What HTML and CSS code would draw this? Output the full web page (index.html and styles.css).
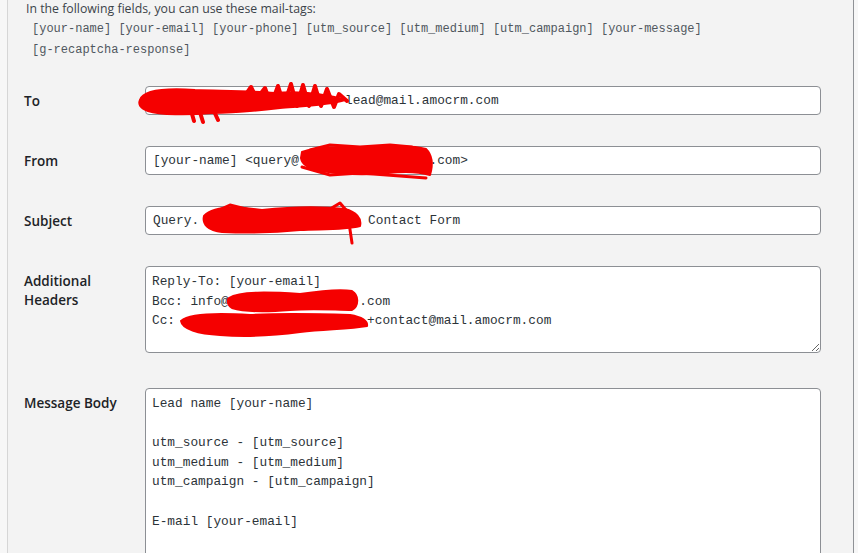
FILE: index.html
```html
<!DOCTYPE html>
<html lang="en">
<head>
<meta charset="utf-8">
<title>Mail</title>
<link rel="stylesheet" href="styles.css">
</head>
<body>
<div class="panel">
  <p class="intro">In the following fields, you can use these mail-tags:</p>
  <p class="tags"><span class="tag">[your-name]</span> <span class="tag">[your-email]</span> <span class="tag">[your-phone]</span> <span class="tag">[utm_source]</span> <span class="tag">[utm_medium]</span> <span class="tag">[utm_campaign]</span> <span class="tag">[your-message]</span> <span class="tag">[g-recaptcha-response]</span></p>
  <div class="form">
    <div class="row">
      <label class="lbl" for="f-to">To</label>
      <input class="field" id="f-to" type="text" value="                         lead@mail.amocrm.com">
    </div>
    <div class="row">
      <label class="lbl" for="f-from">From</label>
      <input class="field" id="f-from" type="text" value="[your-name] &lt;query@                 .com&gt;">
    </div>
    <div class="row">
      <label class="lbl" for="f-subject">Subject</label>
      <input class="field" id="f-subject" type="text" value="Query.                      Contact Form">
    </div>
    <div class="row">
      <label class="lbl" for="f-headers">Additional Headers</label>
      <textarea class="field area" id="f-headers">Reply-To: [your-email]
Bcc: info@                 .com
Cc:                         +contact@mail.amocrm.com</textarea>
    </div>
    <div class="row row-body">
      <label class="lbl" for="f-body">Message Body</label>
      <textarea class="field area body-area" id="f-body">Lead name [your-name]

utm_source - [utm_source]
utm_medium - [utm_medium]
utm_campaign - [utm_campaign]

E-mail [your-email]</textarea>
    </div>
  </div>
</div>
<svg class="redact" width="858" height="553" viewBox="0 0 858 553" aria-hidden="true">
  <g fill="#f50000" stroke="#f50000" stroke-linecap="round" stroke-linejoin="round">
    <!-- To -->
    <path stroke-width="2" d="M140,100 C143,90 165,88 195,90 C225,91 250,91 275,93 C300,91 325,94 345,100 C330,105 305,106 280,108 C255,111 235,113 212,113 C188,115 160,115 148,111 C140,108 138,104 140,100 Z"/>
    <polyline fill="none" stroke-width="4" points="258,97 265,88 271,105 278,86 284,105 291,84 297,106 303,85 309,106 315,86 321,106 327,89 334,107 339,94 347,101"/>
    <path fill="none" stroke-width="4" d="M190,107 L194,121 M198,106 L203,122 M213,109 L218,120 M244,97 L251,87 L257,99"/>
    <!-- From -->
    <path stroke-width="2" d="M302,152 C318,146 345,147 372,148 C395,146 415,146 426,149 C432,155 433,165 430,175 C420,172 405,171 388,173 C365,175 340,174 322,171 C309,169 302,164 301,158 Z"/>
    <path fill="none" stroke-width="3" d="M310,150 L330,145 L360,147 L390,145 L412,147 M302,167 L330,175 L360,173 L400,176 L426,178"/>
    <!-- Subject -->
    <path stroke-width="2" d="M204,216 C212,207 235,206 262,210 C290,207 318,206 345,209 C356,212 362,218 360,226 C345,230 325,229 300,230 C272,233 245,233 222,232 C208,231 202,224 204,216 Z"/>
    <path fill="none" stroke-width="3" d="M349,223 L352,243 M210,214 L230,205 L250,210 M330,209 L340,203 L346,210"/>
    <!-- Bcc -->
    <path stroke-width="2" d="M229,298 C240,291 270,292 300,294 C320,291 340,289 352,291 C359,295 359,306 352,310 C335,310 315,308 290,310 C265,312 245,312 232,308 C227,305 227,300 229,298 Z"/>
    <!-- Cc -->
    <path stroke-width="2" d="M181,321 C190,313 220,313 250,315 C285,313 320,314 350,315 C362,317 368,321 367,326 C350,329 330,329 300,332 C270,336 245,337 220,335 C198,334 182,329 181,321 Z"/>
  </g>
</svg>
</body>
</html>
```

FILE: styles.css
```css
html, body {
  margin: 0;
  padding: 0;
}

body {
  background: #f7f7f7;
  font-family: "Open Sans", "Noto Sans", sans-serif;
  position: relative;
  overflow: hidden;
  height: 553px;
}

.panel {
  margin-left: 7px;
  width: 847px;
  box-sizing: border-box;
  min-height: 553px;
  border-left: 1px solid #d6d6d6;
  border-right: 1px solid #8f9296;
  background: #f3f3f3;
  padding: 0 0 0 16px;
}

.intro {
  margin: 0;
  padding: 0 0 0 2px;
  font-size: 12.3px;
  line-height: 17px;
  color: #3c434a;
}

.tags {
  margin: 0;
  padding: 2px 0 0 8px;
  width: 790px;
  font-family: "Liberation Mono", "DejaVu Sans Mono", monospace;
  font-size: 12px;
  line-height: 21px;
  color: #50575e;
}

.tag {
  white-space: nowrap;
}

.form {
  display: flex;
  flex-direction: column;
  gap: 31px;
  margin-top: 25px;
}

.row {
  display: grid;
  grid-template-columns: 121px 676px;
  align-items: start;
}

.row-body {
  margin-top: 4px;
}

.lbl {
  padding-top: 6px;
  padding-right: 8px;
  font-size: 13.5px;
  font-weight: 600;
  line-height: 19px;
  color: #1d2327;
}

.field {
  display: block;
  box-sizing: border-box;
  width: 676px;
  height: 29px;
  margin: 0;
  padding: 0 7px;
  border: 1px solid #8c8f94;
  border-radius: 4px;
  background: #fff;
  font-family: "Liberation Mono", "DejaVu Sans Mono", monospace;
  font-size: 12.8px;
  color: #2c3338;
  white-space: pre;
  outline: none;
}

.area {
  height: 87px;
  padding: 5px 6px;
  line-height: 19.6px;
  resize: vertical;
  overflow: hidden;
}

.body-area {
  height: 300px;
}

.redact {
  position: absolute;
  top: 0;
  left: 0;
  pointer-events: none;
}
```
